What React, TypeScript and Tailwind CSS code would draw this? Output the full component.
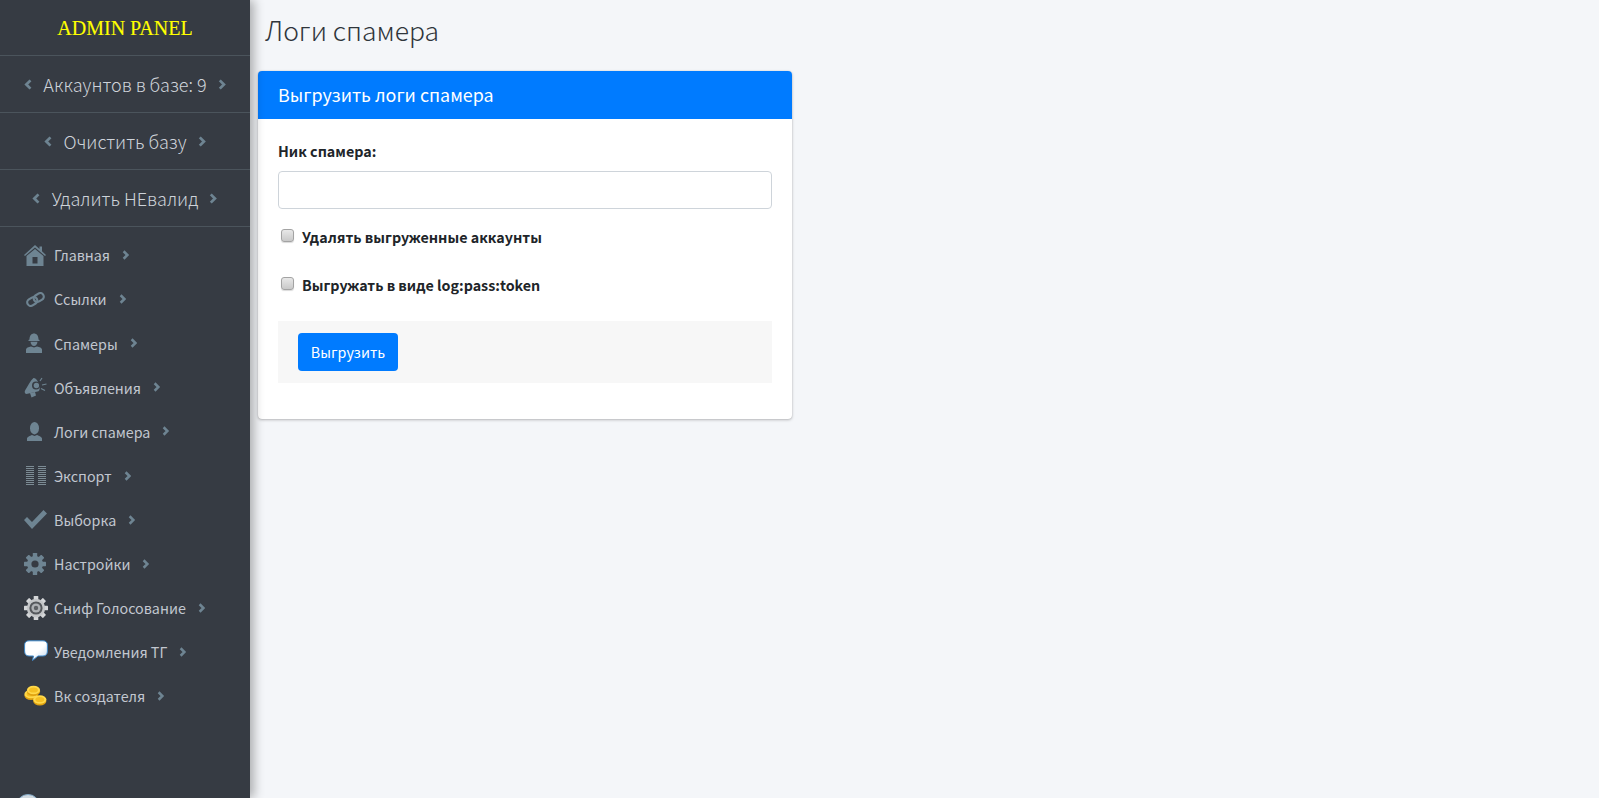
import React from "react";

const iconColor = "#6e8492";
const sidebarBg = "#363b43";

function Chevron({ dir = "right", size = 10 }: { dir?: "left" | "right"; size?: number }) {
  return (
    <svg width={size * 0.75} height={size} viewBox="0 0 6 8" className="shrink-0">
      <path
        d={dir === "right" ? "M1.3 1 L4.3 4 L1.3 7" : "M4.7 1 L1.7 4 L4.7 7"}
        fill="none"
        stroke={iconColor}
        strokeWidth="2"
      />
    </svg>
  );
}

function HomeIcon() {
  return (
    <svg width="22" height="21" viewBox="0 0 22 21">
      <path fill={iconColor} d="M11 0 L15.5 4 V1.5 H18 V6.2 L22 10 L21 11 L11 2.6 L1 11 L0 10 Z" />
      <path fill={iconColor} fillRule="evenodd" d="M11 4 L19.5 11 V21 H2.5 V11 Z M8.5 12 V18.5 H13.5 V12 Z" />
    </svg>
  );
}

function LinkIcon() {
  return (
    <svg width="19" height="15" viewBox="0 0 19 15" className="ml-[2px]">
      <g fill="none" stroke={iconColor} strokeWidth="2.2">
        <rect x="1" y="6" width="10.5" height="7" rx="3.5" transform="rotate(-32 6.2 9.5)" />
        <rect x="7.5" y="2" width="10.5" height="7" rx="3.5" transform="rotate(-32 12.8 5.5)" />
      </g>
    </svg>
  );
}

function WorkerIcon() {
  return (
    <svg width="16" height="20" viewBox="0 0 16 20" className="ml-[2px]">
      <path fill={iconColor} d="M3.5 6.5 C3.5 2.5 5.5 0.5 8 0.5 C10.5 0.5 12.5 2.5 12.5 6.5 L13.5 7 V8 H2.5 V7 Z" />
      <path fill={iconColor} d="M4.5 8.8 H11.5 C11.2 11.3 10 13 8 13 C6 13 4.8 11.3 4.5 8.8 Z" />
      <path fill={iconColor} d="M0 20 V16.5 C0 14.8 2.5 14 5 13.5 L8 14.5 L11 13.5 C13.5 14 16 14.8 16 16.5 V20 Z" />
    </svg>
  );
}

function MegaphoneIcon() {
  return (
    <svg width="23" height="21" viewBox="0 0 23 21">
      <path fill={iconColor} d="M9.5 1 C11.5 0.6 13.5 3 15 7 C16 11 16 13.5 14.5 14.2 L2.5 17 C0.3 16.5 0.2 14.3 1.6 12.4 C4 9 6.5 3.5 9.5 1 Z" />
      <circle cx="12" cy="8.5" r="4" fill={sidebarBg} />
      <circle cx="12.4" cy="8.5" r="2.7" fill={iconColor} />
      <path fill={iconColor} d="M6 16 L11 15 L12 18.5 L7.5 20.5 Z" />
      <path stroke={iconColor} strokeWidth="1.2" fill="none" d="M16 4 L18 1 M18 8 L22.5 7 M17 11.5 L21 13.5" />
    </svg>
  );
}

function UserIcon() {
  return (
    <svg width="15" height="19" viewBox="0 0 15 19" className="ml-[3px]">
      <ellipse cx="7.5" cy="6.2" rx="4.5" ry="6.2" fill={iconColor} />
      <path fill={iconColor} d="M0 19 V16.5 C0 14.8 3 14 5 13 L7.5 14 L10 13 C12 14 15 14.8 15 16.5 V19 Z" />
    </svg>
  );
}

function ExportIcon() {
  const rows = [0, 2, 4, 6, 8, 10, 12, 14, 16, 18];
  return (
    <svg width="21" height="19" viewBox="0 0 21 19" className="ml-[2px]">
      {rows.map((y) => (
        <g key={y} fill="#7c8b94">
          <rect x="0" y={y} width="8" height="1" />
          <rect x="12" y={y} width="8" height="1" />
        </g>
      ))}
    </svg>
  );
}

function CheckIcon() {
  return (
    <svg width="23" height="19" viewBox="0 0 23 19">
      <path fill={iconColor} d="M0 10 L3 7 L8 12 L19.5 0 L23 3.5 L8 19 Z" />
    </svg>
  );
}

function gearTeeth(n: number, cx: number, cy: number, w: number, h: number, fill: string) {
  return Array.from({ length: n }, (_, i) => (
    <rect key={i} x={cx - w / 2} y={cy - h} width={w} height={h * 2} rx="0.6" fill={fill} transform={`rotate(${(i * 180) / n} ${cx} ${cy})`} />
  ));
}

function GearIcon() {
  return (
    <svg width="22" height="22" viewBox="0 0 22 22">
      {gearTeeth(4, 11, 11, 4.4, 11, iconColor)}
      <circle cx="11" cy="11" r="8" fill={iconColor} />
      <circle cx="11" cy="11" r="3.6" fill={sidebarBg} />
    </svg>
  );
}

function SniffIcon() {
  return (
    <svg width="24" height="24" viewBox="0 0 24 24">
      {gearTeeth(4, 12, 12, 4.6, 12, "#d4d6d8")}
      <circle cx="12" cy="12" r="9.2" fill="#c4c6c8" />
      <circle cx="12" cy="12" r="6.6" fill="#55585c" />
      <circle cx="12" cy="12" r="4.6" fill="#aeb1b4" />
      <circle cx="12" cy="12" r="2.2" fill="#5e6165" />
    </svg>
  );
}

function ChatIcon() {
  return (
    <svg width="24" height="23" viewBox="0 0 24 23">
      <defs>
        <linearGradient id="chat" x1="0" y1="0" x2="1" y2="1">
          <stop offset="0.55" stopColor="#ffffff" />
          <stop offset="1" stopColor="#bcd6ee" />
        </linearGradient>
      </defs>
      <path
        fill="url(#chat)"
        stroke="#3d86c6"
        strokeWidth="1"
        d="M5 0.8 H19 C22 0.8 23.4 2.4 23.4 5 V11 C23.4 14.2 22 16 19 16 H14 L8.5 20.5 L9.5 16 H5 C2 16 0.6 14.2 0.6 11 V5 C0.6 2.4 2 0.8 5 0.8 Z"
      />
    </svg>
  );
}

function Coin({ x, y }: { x: number; y: number }) {
  return (
    <g>
      <ellipse cx={x} cy={y + 1.6} rx="6.6" ry="4.3" fill="#e0a210" />
      <ellipse cx={x} cy={y} rx="6.6" ry="4.3" fill="#ffd84a" />
      <ellipse cx={x} cy={y} rx="4.4" ry="2.6" fill="#f5bf22" />
    </g>
  );
}

function CoinsIcon() {
  return (
    <svg width="23" height="21" viewBox="0 0 23 21">
      <Coin x={7} y={9} />
      <Coin x={9.5} y={5} />
      <Coin x={15.8} y={14.5} />
    </svg>
  );
}

const bigRows = ["Аккаунтов в базе: 9", "Очистить базу", "Удалить НЕвалид"];

const menu: { label: string; icon: React.ReactNode }[] = [
  { label: "Главная", icon: <HomeIcon /> },
  { label: "Ссылки", icon: <LinkIcon /> },
  { label: "Спамеры", icon: <WorkerIcon /> },
  { label: "Объявления", icon: <MegaphoneIcon /> },
  { label: "Логи спамера", icon: <UserIcon /> },
  { label: "Экспорт", icon: <ExportIcon /> },
  { label: "Выборка", icon: <CheckIcon /> },
  { label: "Настройки", icon: <GearIcon /> },
  { label: "Сниф Голосование", icon: <SniffIcon /> },
  { label: "Уведомления ТГ", icon: <ChatIcon /> },
  { label: "Вк создателя", icon: <CoinsIcon /> },
];

const checks = ["Удалять выгруженные аккаунты", "Выгружать в виде log:pass:token"];

export default function App() {
  return (
    <div className="flex h-screen overflow-hidden bg-[#f4f6f9] font-['Noto_Sans_CJK_SC','Liberation_Sans',sans-serif] text-[#212529]">
      <aside className="relative z-10 w-[250px] shrink-0 overflow-hidden bg-[#363b43] shadow-[4px_0_10px_rgba(0,0,0,0.3)]">
        <div className="flex h-[56px] items-center justify-center border-b border-[#4b545c] pt-[1px] font-['Liberation_Serif',serif] text-[20px] text-[#ffff00] [-webkit-text-stroke:0.12px_#ffff00]">
          ADMIN PANEL
        </div>
        {bigRows.map((label) => (
          <div key={label} className="flex h-[57px] items-center justify-center gap-[11px] border-b border-[#4b545c] text-[18px] font-light text-[#ced3da]">
            <Chevron dir="left" size={11} />
            <span>{label}</span>
            <Chevron size={11} />
          </div>
        ))}
        <nav className="pt-[6px]">
          {menu.map((item) => (
            <div key={item.label} className="flex h-[44.1px] items-center pl-6 text-[14.3px] text-[#c2c7d0]">
              <span className="flex w-[30px] shrink-0 items-center justify-start">{item.icon}</span>
              <span>{item.label}</span>
              <span className="ml-3">
                <Chevron />
              </span>
            </div>
          ))}
        </nav>
        <div className="ml-[16px] mt-[76px] h-6 w-6 rounded-full border border-[#7fa6c4] bg-[#cfd8df]" />
      </aside>

      <main className="min-w-0 flex-1 px-2">
        <h1 className="ml-[7px] flex h-[71px] items-center pb-[12px] text-[26.5px] font-light text-[#2f353b]">Логи спамера</h1>
        <section className="w-[534px] overflow-hidden rounded-[4px] bg-white shadow-[0_0_1px_rgba(0,0,0,0.2),0_1px_3px_rgba(0,0,0,0.25)]">
          <div className="flex h-12 items-center bg-[#007bff] px-5 pb-[2px] text-[17.9px] text-white">Выгрузить логи спамера</div>
          <div className="px-5 pb-9 pt-[19px]">
            <label className="block text-[14.3px] font-bold leading-[26px]">Ник спамера:</label>
            <input type="text" className="mt-[7px] block h-[38px] w-full rounded-[4px] border border-[#ced4da] bg-white" />
            <div className="pb-[15px] pt-[12px]">
              {checks.map((label) => (
                <label key={label} className="flex h-[48px] items-start pt-[5px] text-[14.3px] font-bold">
                  <input
                    type="checkbox"
                    className="ml-[3px] mr-[8px] mt-[3px] h-[13px] w-[13px] appearance-none rounded-[3px] border border-[#a3a3a3] bg-gradient-to-b from-[#e8e8e8] to-[#c9c9c9] shadow-[0_1px_1px_rgba(0,0,0,0.15)]"
                  />
                  <span className="leading-[22px]">{label}</span>
                </label>
              ))}
            </div>
            <div className="-mt-[11px] bg-[#f7f7f7] px-5 py-3">
              <button className="h-[38px] w-[100px] rounded-[4px] bg-[#007bff] text-[14.3px] text-white">Выгрузить</button>
            </div>
          </div>
        </section>
      </main>
    </div>
  );
}
